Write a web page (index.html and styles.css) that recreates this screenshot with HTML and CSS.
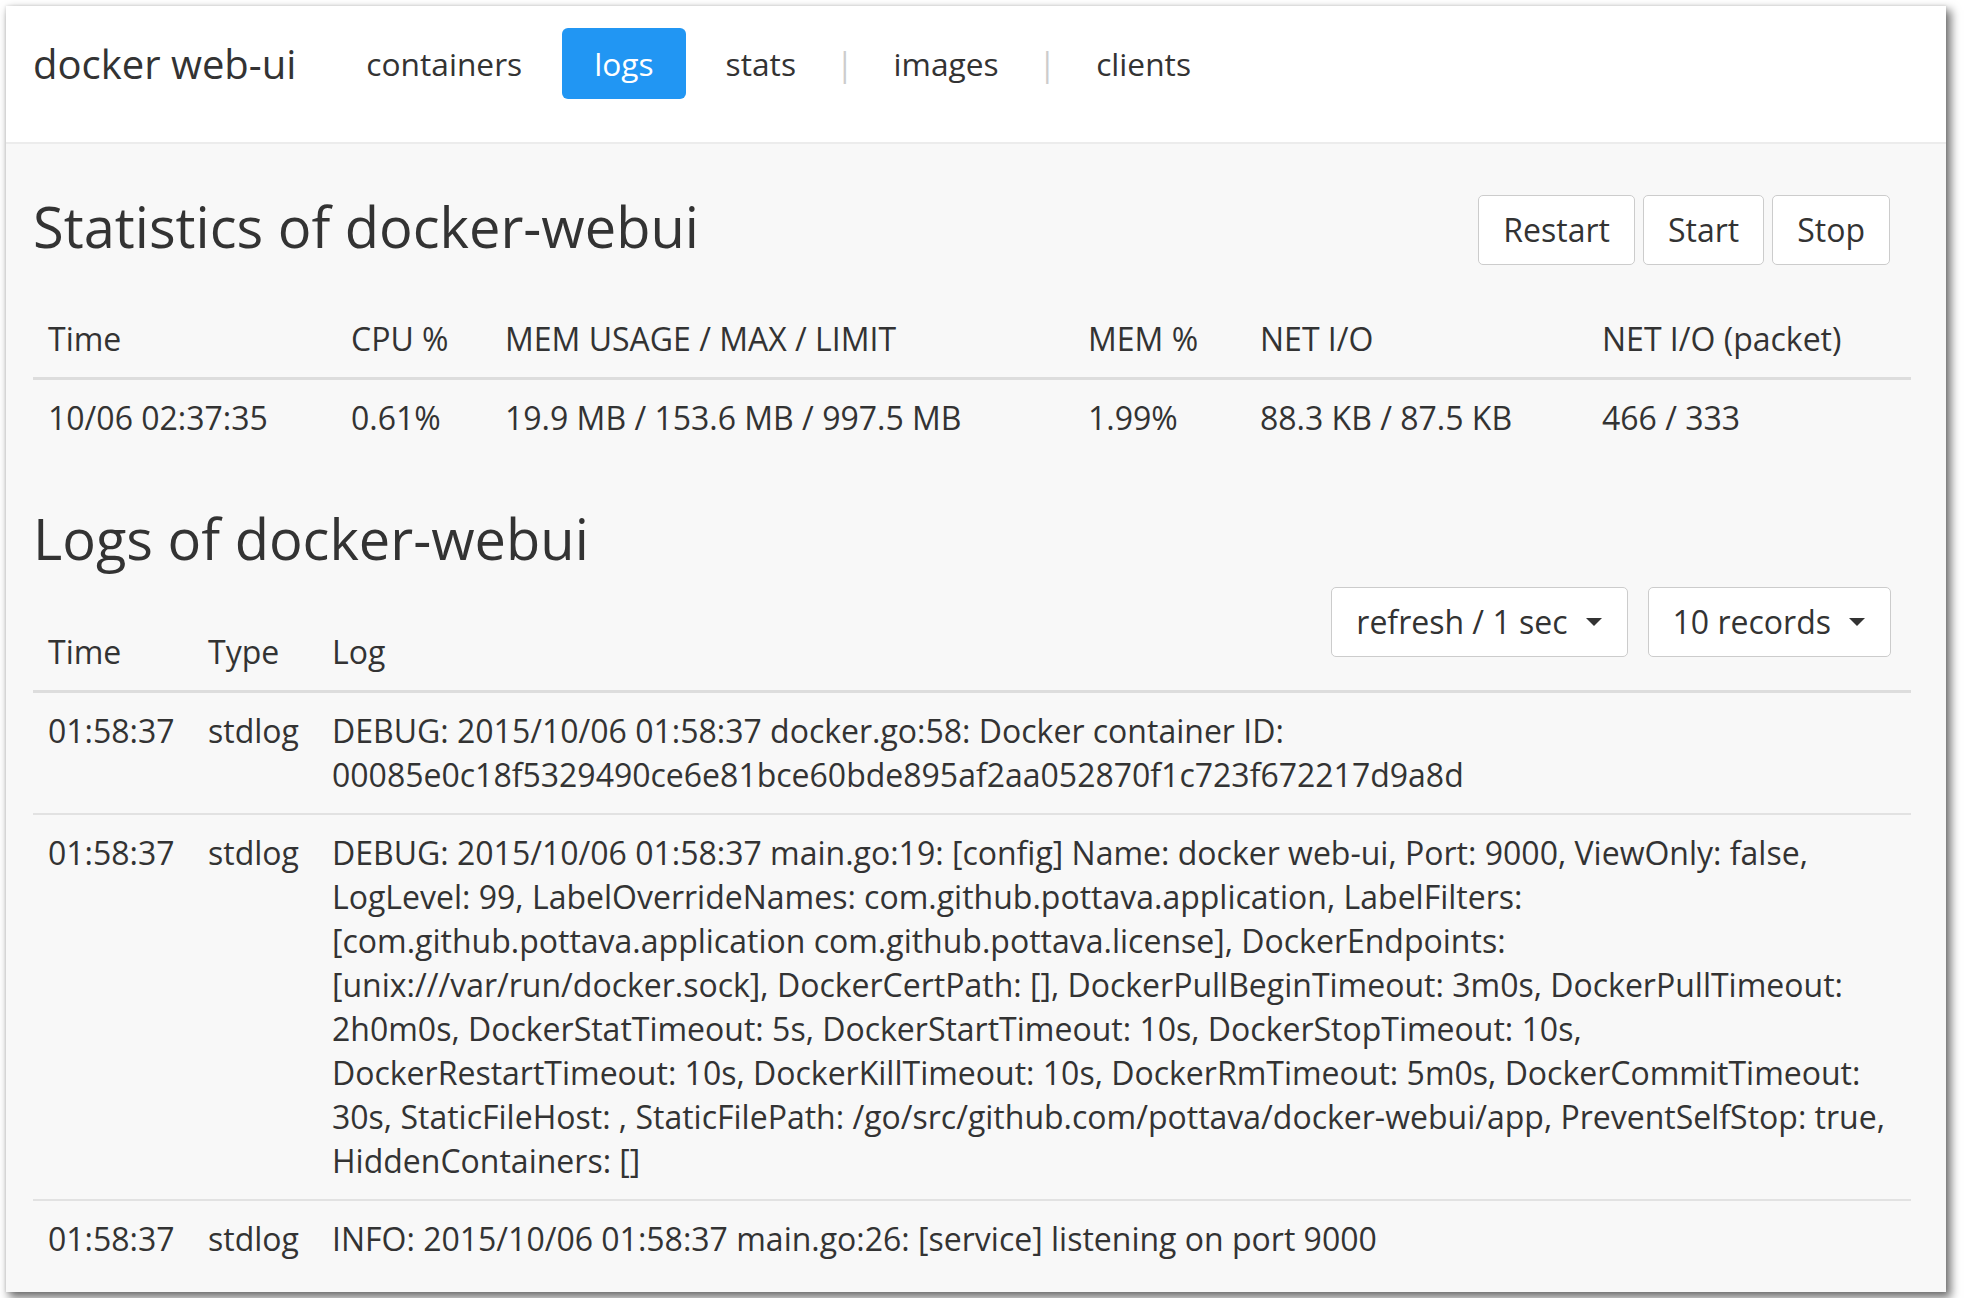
FILE: index.html
```html
<!DOCTYPE html>
<html lang="en">
<head>
<meta charset="utf-8">
<title>docker web-ui</title>
<link rel="stylesheet" href="styles.css">
</head>
<body>
<div class="window">
  <header class="navbar">
    <span class="brand">docker web-ui</span>
    <nav class="nav">
      <a class="nav-link">containers</a>
      <a class="nav-link active">logs</a>
      <a class="nav-link">stats</a>
      <span class="sep">|</span>
      <a class="nav-link">images</a>
      <span class="sep">|</span>
      <a class="nav-link">clients</a>
    </nav>
  </header>
  <main class="content">
    <section class="stats">
      <div class="section-head">
        <h1>Statistics of docker-webui</h1>
        <div class="btn-group">
          <button class="btn">Restart</button>
          <button class="btn">Start</button>
          <button class="btn">Stop</button>
        </div>
      </div>
      <table class="table stats-table">
        <thead>
          <tr><th>Time</th><th>CPU %</th><th>MEM USAGE / MAX / LIMIT</th><th>MEM %</th><th>NET I/O</th><th>NET I/O (packet)</th></tr>
        </thead>
        <tbody>
          <tr><td>10/06 02:37:35</td><td>0.61%</td><td>19.9 MB / 153.6 MB / 997.5 MB</td><td>1.99%</td><td>88.3 KB / 87.5 KB</td><td>466 / 333</td></tr>
        </tbody>
      </table>
    </section>
    <section class="logs">
      <h1>Logs of docker-webui</h1>
      <div class="logs-body">
        <div class="toolbar">
          <button class="btn">refresh / 1 sec<span class="caret"></span></button>
          <button class="btn">10 records<span class="caret"></span></button>
        </div>
        <table class="table logs-table">
          <thead>
            <tr><th>Time</th><th>Type</th><th>Log</th></tr>
          </thead>
          <tbody>
            <tr><td>01:58:37</td><td>stdlog</td><td>DEBUG: 2015/10/06 01:58:37 docker.go:58: Docker container ID: 00085e0c18f5329490ce6e81bce60bde895af2aa052870f1c723f672217d9a8d</td></tr>
            <tr><td>01:58:37</td><td>stdlog</td><td>DEBUG: 2015/10/06 01:58:37 main.go:19: [config] Name: docker web-ui, Port: 9000, ViewOnly: false, LogLevel: 99, LabelOverrideNames: com.github.pottava.application, LabelFilters: [com.github.pottava.application com.github.pottava.license], DockerEndpoints: [unix:///var/run/docker.sock], DockerCertPath: [], DockerPullBeginTimeout: 3m0s, DockerPullTimeout: 2h0m0s, DockerStatTimeout: 5s, DockerStartTimeout: 10s, DockerStopTimeout: 10s, DockerRestartTimeout: 10s, DockerKillTimeout: 10s, DockerRmTimeout: 5m0s, DockerCommitTimeout: 30s, StaticFileHost: , StaticFilePath: /go/src/github.com/pottava/docker-webui/app, PreventSelfStop: true, HiddenContainers: []</td></tr>
            <tr><td>01:58:37</td><td>stdlog</td><td>INFO: 2015/10/06 01:58:37 main.go:26: [service] listening on port 9000</td></tr>
          </tbody>
        </table>
      </div>
    </section>
  </main>
</div>
</body>
</html>
```
FILE: styles.css
```css
* { box-sizing: border-box; }

html, body {
  margin: 0;
  padding: 0;
  background: #ffffff;
}

body {
  font-family: "Open Sans", "DejaVu Sans", sans-serif;
  color: #333333;
  font-size: 32px;
  line-height: 44px;
}

.window {
  margin: 6px;
  width: 1940px;
  height: 1286px;
  background: #f8f8f8;
  overflow: hidden;
  box-shadow: 4px 5px 9px 1px rgba(0, 0, 0, 0.55), 0 0 3px rgba(0, 0, 0, 0.12);
}

/* ---------- navbar ---------- */
.navbar {
  height: 138px;
  background: #ffffff;
  border-bottom: 2px solid #ececec;
  padding: 22px 0 0 27px;
  display: flex;
  align-items: flex-start;
}

.brand {
  font-size: 40px;
  line-height: 71px;
  color: #333;
}

.nav {
  display: flex;
  align-items: flex-start;
  gap: 8px;
  margin-left: 38px;
}

.nav-link {
  display: block;
  padding: 0 32px;
  font-size: 31.7px;
  line-height: 71px;
  color: #333;
  border-radius: 6px;
}

.nav-link.active {
  background: #2196f3;
  color: #ffffff;
}

.sep {
  font-size: 32px;
  line-height: 71px;
  color: #cccccc;
  margin: 0;
}

/* ---------- content ---------- */
.content {
  padding: 0 35px 0 27px;
}

h1 {
  margin: 0;
  font-size: 56px;
  line-height: 62px;
  font-weight: 400;
  color: #333;
}

.section-head {
  display: flex;
  justify-content: space-between;
  align-items: flex-start;
  margin-top: 51px;
}

.btn-group {
  display: flex;
  gap: 8px;
  margin-right: 21px;
}

.btn {
  font-family: inherit;
  font-size: 32px;
  line-height: 44px;
  color: #333;
  background: #ffffff;
  border: 1px solid #cccccc;
  border-radius: 5px;
  padding: 12px 24px;
  margin: 0;
  display: flex;
  align-items: center;
}

.caret {
  display: inline-block;
  width: 0;
  height: 0;
  margin-left: 18px;
  margin-right: 1px;
  border-top: 8px solid #333;
  border-left: 8px solid transparent;
  border-right: 8px solid transparent;
}

/* ---------- tables ---------- */
.table {
  width: 100%;
  border-collapse: collapse;
  table-layout: fixed;
}

.table th,
.table td {
  padding: 16px 15px;
  text-align: left;
  font-weight: 400;
  vertical-align: top;
}

.table th {
  border-bottom: 3px solid #dddddd;
}

.table td {
  border-top: 2px solid #e2e2e2;
}

.stats-table {
  margin-top: 36px;
}

.stats-table th:nth-child(1) { width: 303px; }
.stats-table th:nth-child(2) { width: 154px; }
.stats-table th:nth-child(3) { width: 583px; }
.stats-table th:nth-child(4) { width: 172px; }
.stats-table th:nth-child(5) { width: 342px; }
.stats-table th:nth-child(6) { width: 324px; }

.logs {
  margin-top: 51px;
}

.logs-body {
  display: grid;
  margin-top: 18px;
}

.logs-body > .toolbar,
.logs-body > .logs-table {
  grid-area: 1 / 1;
}

.toolbar {
  justify-self: end;
  align-self: start;
  display: flex;
  gap: 20px;
  margin-right: 20px;
  position: relative;
  z-index: 1;
}

.logs-table {
  margin-top: 27px;
}

.logs-table th:nth-child(1) { width: 160px; }
.logs-table th:nth-child(2) { width: 124px; }
```
